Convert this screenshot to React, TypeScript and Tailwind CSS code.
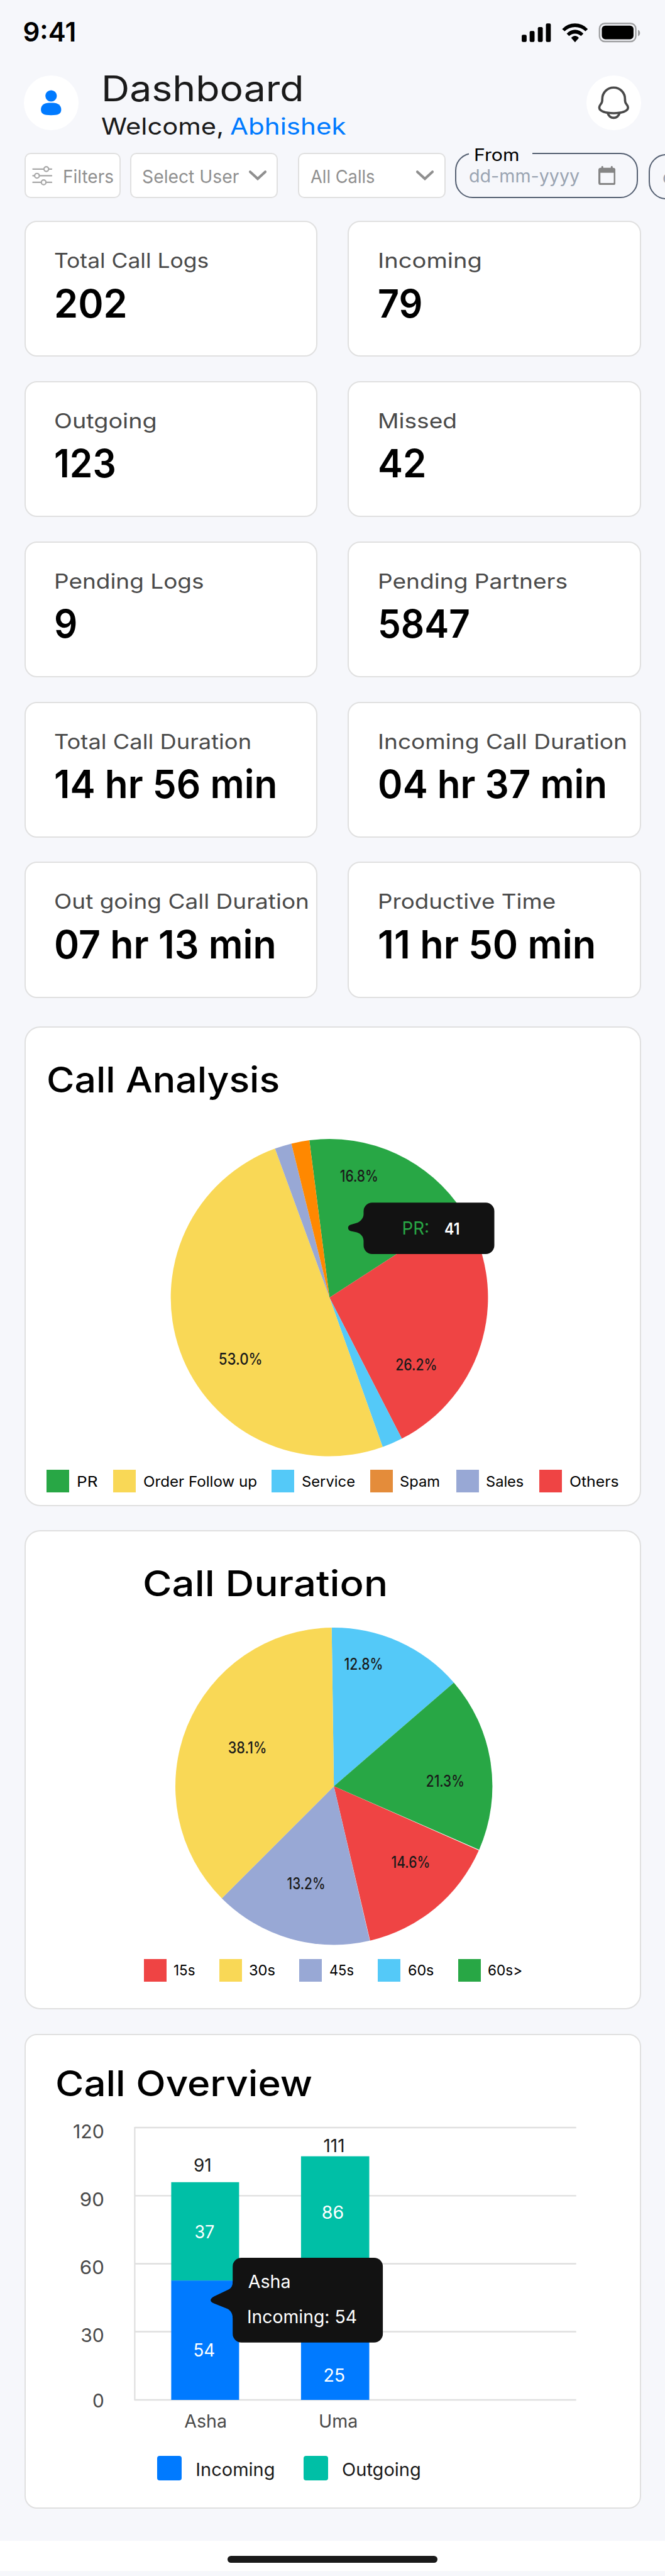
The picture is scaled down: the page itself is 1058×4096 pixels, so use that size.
import type { ReactNode } from "react";

type Stat = { label: string; labelFit: string; value: string; valueFit: string };

const stats: Stat[] = [
  { label: "Total Call Logs", labelFit: "scale-x-[1.074]", value: "202", valueFit: "scale-x-[0.987]" },
  { label: "Incoming", labelFit: "scale-x-[1.155]", value: "79", valueFit: "scale-x-[0.956]" },
  { label: "Outgoing", labelFit: "scale-x-[1.145]", value: "123", valueFit: "scale-x-[0.947]" },
  { label: "Missed", labelFit: "scale-x-[1.125]", value: "42", valueFit: "scale-x-[0.969]" },
  { label: "Pending Logs", labelFit: "scale-x-[1.12]", value: "9", valueFit: "scale-x-[0.94]" },
  { label: "Pending Partners", labelFit: "scale-x-[1.124]", value: "5847", valueFit: "scale-x-[0.943]" },
  { label: "Total Call Duration", labelFit: "scale-x-[1.1]", value: "14 hr 56 min", valueFit: "scale-x-[0.972]" },
  { label: "Incoming Call Duration", labelFit: "scale-x-[1.124]", value: "04 hr 37 min", valueFit: "scale-x-[0.969]" },
  { label: "Out going Call Duration", labelFit: "scale-x-[1.121]", value: "07 hr 13 min", valueFit: "scale-x-[0.981]" },
  { label: "Productive Time", labelFit: "scale-x-[1.115]", value: "11 hr 50 min", valueFit: "scale-x-[0.987]" },
];

function StatusIcons() {
  return (
    <svg viewBox="0 0 1020 330" className="h-[66.1px] w-[204.4px]">
      <rect x="30" y="186" width="39" height="57" rx="11" />
      <rect x="93" y="156" width="39" height="87" rx="11" />
      <rect x="158" y="125" width="39" height="118" rx="11" />
      <rect x="222" y="96" width="39" height="147" rx="11" />
      <path d="M351 141A138 138 0 0 1 555 141L536 159A118 118 0 0 0 371 159Z" />
      <path d="M387 177A88 88 0 0 1 520 177L501 196A68 68 0 0 0 406 196Z" />
      <path d="M423 211A37 37 0 0 1 484 211L453.500 246Z" />
      <rect x="648" y="96" width="288" height="144" rx="42" fill="none" stroke="#a0a1a3" strokeWidth="12" />
      <rect x="666" y="113" width="252" height="109" rx="28" />
      <path d="M954 147C975 155 975 189 954 197Z" fill="#97989a" />
    </svg>
  );
}

function PersonIcon() {
  return (
    <svg viewBox="0 0 86.6 86.6" className="size-full" fill="#007aff">
      <circle cx="43.3" cy="32.5" r="9.1" />
      <path d="M27.100 54C27.100 47 32.500 43.400 40 43.400H46.500C54 43.400 59.400 47.500 59.400 54C59.400 61 55 63.200 43.200 63.200C31.500 63.200 27.100 61 27.100 54Z" />
    </svg>
  );
}

function BellIcon() {
  return (
    <svg viewBox="36 30 432 432" className="size-full" fill="none" stroke="#4a4a4a" strokeWidth="18">
      <path d="M252 126C200 126 162 168 162 215C162 232 162 240 155 250C146 263 138 270 138 285C138 315 190 329 252 329C314 329 366 315 366 285C366 270 357 262 348 250C342 240 342 232 342 215C342 168 304 126 252 126Z" />
      <path d="M205 330C213 352 232 366 252 366C272 366 291 352 299 330" />
    </svg>
  );
}

function SlidersIcon() {
  return (
    <svg viewBox="70 105 172 172" className="size-[34.500px] shrink-0" fill="#fff" stroke="#a8a8a8" strokeWidth="11" strokeLinecap="round">
      <path d="M82 139H230M82 192H230M82 244H230" />
      <circle cx="188" cy="139" r="18.5" />
      <circle cx="114" cy="192" r="18.5" />
      <circle cx="167" cy="244" r="18.5" />
    </svg>
  );
}

function Chevron() {
  return (
    <svg viewBox="0 0 28 16" className="ml-auto h-4 w-7 shrink-0" fill="none" stroke="#8f8f8f" strokeWidth="4" strokeLinecap="round">
      <path d="M2 2.200L14 13.300L26 2.200" />
    </svg>
  );
}

function CalendarIcon() {
  return (
    <svg viewBox="0 0 127 151" preserveAspectRatio="none" className="ml-auto h-[30.300px] w-[27.300px] shrink-0" fill="#858585">
      <rect x="22" y="0" width="14" height="30" rx="7" />
      <rect x="92" y="0" width="14" height="30" rx="7" />
      <path fillRule="evenodd" d="M18 14H109Q127 14 127 32V133Q127 151 109 151H18Q0 151 0 133V32Q0 14 18 14ZM15 53V129Q15 135 21 135H108Q114 135 114 129V53Z" />
    </svg>
  );
}

function SelectBox({ className, children }: { className: string; children: ReactNode }) {
  return (
    <div className={`flex h-[72px] shrink-0 items-center rounded-[10px] border-2 border-[#e0e0e0] bg-white text-[29px] leading-none text-[#909090] ${className}`}>
      {children}
    </div>
  );
}

function DateField({ label, className = "" }: { label?: string; className?: string }) {
  return (
    <div className={`relative flex h-[72px] w-[291.200px] shrink-0 items-center rounded-[28px] border-2 border-[#556072] pr-[33.500px] pl-5 ${className}`}>
      {label && (
        <span className="absolute -top-[13.500px] left-[20.600px] h-8 w-[101px] bg-[#f6f7fb] pl-2 text-[27px] leading-8 text-black">
          <span className="inline-block origin-left scale-x-[1.12]">{label}</span>
        </span>
      )}
      <span className="inline-block origin-left scale-x-[1.024] pt-[3px] text-[28px] leading-none text-[#9aa4b2]">dd-mm-yyyy</span>
      <CalendarIcon />
    </div>
  );
}

function StatCard({ label, labelFit, value, valueFit }: Stat) {
  return (
    <div className="h-[216.200px] rounded-[20px] border-2 border-[#e0e0e0] bg-white pt-[41px] pl-[45.300px] whitespace-nowrap">
      <div className="text-[33px] leading-10 text-[#4a4a4a]">
        <span className={`inline-block origin-left ${labelFit}`}>{label}</span>
      </div>
      <div className="mt-[12.700px] text-[62px] leading-[72px] font-semibold text-black">
        <span className={`inline-block origin-left ${valueFit}`}>{value}</span>
      </div>
    </div>
  );
}

function CardTitle({ fit, className, children }: { fit: string; className?: string; children: ReactNode }) {
  return (
    <h2 className={`relative top-px text-[56px] leading-[64px] font-medium whitespace-nowrap text-black ${className}`}>
      <span className={`inline-block origin-left ${fit}`}>{children}</span>
    </h2>
  );
}

type Slice = { from: number; to: number; color: string };
type PieLabel = { text: string; x: number; y: number; width: number };

function arc(cx: number, cy: number, r: number, from: number, to: number) {
  const point = (deg: number) => {
    const a = ((deg - 90) * Math.PI) / 180;
    return `${(cx + r * Math.cos(a)).toFixed(2)} ${(cy + r * Math.sin(a)).toFixed(2)}`;
  };
  return `M${cx} ${cy}L${point(from)}A${r} ${r} 0 ${to - from > 180 ? 1 : 0} 1 ${point(to)}Z`;
}

function Pie({ slices, labels, className, children }: { slices: Slice[]; labels: PieLabel[]; className: string; children?: ReactNode }) {
  return (
    <svg viewBox="0 0 504.4 504.4" className={`block size-[504.400px] overflow-visible ${className}`}>
      {slices.map((s) => (
        <path key={s.color} d={arc(252.2, 252.2, 252.2, s.from, s.to)} fill={s.color} />
      ))}
      {labels.map((l) => (
        <text key={l.text} x={l.x - 1.2} y={l.y} textLength={l.width + 2.4} lengthAdjust="spacingAndGlyphs" className="fill-[#1a1a1a] text-[25px] font-medium">
          {l.text}
        </text>
      ))}
      {children}
    </svg>
  );
}

const analysisSlices: Slice[] = [
  { from: -7.3, to: 57.1, color: "#28a745" },
  { from: 57.1, to: 152.85, color: "#ef4444" },
  { from: 152.85, to: 160.4, color: "#54c9f8" },
  { from: 160.4, to: 339.9, color: "#f9d856" },
  { from: 339.9, to: 346.1, color: "#98a8d5" },
  { from: 346.1, to: 352.7, color: "#ff8800" },
];

const analysisLabels: PieLabel[] = [
  { text: "16.8%", x: 270, y: 68, width: 58.7 },
  { text: "53.0%", x: 77, y: 358.600, width: 67.5 },
  { text: "26.2%", x: 358.400, y: 368, width: 64 },
];

const durationSlices: Slice[] = [
  { from: -0.8, to: 49.2, color: "#54c9f8" },
  { from: 49.2, to: 113.6, color: "#28a745" },
  { from: 113.9, to: 166.8, color: "#ef4444" },
  { from: 166.9, to: 225, color: "#98a8d5" },
  { from: 225, to: 359.2, color: "#f9d856" },
];

const durationLabels: PieLabel[] = [
  { text: "12.8%", x: 269.800, y: 67.500, width: 59.4 },
  { text: "38.1%", x: 85, y: 200, width: 59.3 },
  { text: "21.3%", x: 400, y: 252.600, width: 58.7 },
  { text: "14.6%", x: 344.700, y: 382.500, width: 59.4 },
  { text: "13.2%", x: 178.700, y: 416.300, width: 58.7 },
];

type Legend = { label: string; swatch: string; width: string; fit: string };

const analysisLegend: Legend[] = [
  { label: "PR", swatch: "bg-[#28a745]", width: "w-[105.900px]", fit: "scale-x-[1.11]" },
  { label: "Order Follow up", swatch: "bg-[#f9d856]", width: "w-[252.400px]", fit: "scale-x-[1.028]" },
  { label: "Service", swatch: "bg-[#54c9f8]", width: "w-[156.500px]", fit: "scale-x-[1.012]" },
  { label: "Spam", swatch: "bg-[#e48c3a]", width: "w-[137px]", fit: "scale-x-[1.008]" },
  { label: "Sales", swatch: "bg-[#98a8d5]", width: "w-[132.200px]", fit: "scale-x-[1.004]" },
  { label: "Others", swatch: "bg-[#ef4444]", width: "w-[130px]", fit: "scale-x-[1.055]" },
];

const durationLegend: Legend[] = [
  { label: "15s", swatch: "bg-[#ef4444]", width: "w-[120.100px]", fit: "scale-x-[0.95]" },
  { label: "30s", swatch: "bg-[#f9d856]", width: "w-[127.500px]", fit: "scale-x-[1.005]" },
  { label: "45s", swatch: "bg-[#98a8d5]", width: "w-[124.800px]", fit: "scale-x-[0.93]" },
  { label: "60s", swatch: "bg-[#54c9f8]", width: "w-[127.600px]", fit: "scale-x-[0.99]" },
  { label: "60s>", swatch: "bg-[#28a745]", width: "w-[110px]", fit: "scale-x-[0.96]" },
];

function LegendRow({ items, className }: { items: Legend[]; className: string }) {
  return (
    <div className={`mt-[22.500px] flex h-9 ${className}`}>
      {items.map((i) => (
        <div key={i.label} className={`flex shrink-0 items-center whitespace-nowrap ${i.width}`}>
          <span className={`size-9 shrink-0 ${i.swatch}`} />
          <span className={`ml-[11.500px] inline-block origin-left text-[23.500px] leading-none font-normal text-black ${i.fit}`}>{i.label}</span>
        </div>
      ))}
    </div>
  );
}

type ChartText = { text: string; x: number; y: number; width: number; color?: string };

const axisLabels: ChartText[] = [
  { text: "120", x: 116.7, y: 3400.2, width: 47.3 },
  { text: "90", x: 127.6, y: 3508.2, width: 36.4 },
  { text: "60", x: 127.6, y: 3616.2, width: 36.4 },
  { text: "30", x: 129, y: 3724.2, width: 35 },
  { text: "0", x: 147.8, y: 3827.7, width: 16.2 },
];

const chartTexts: ChartText[] = [
  { text: "91", x: 309, y: 3453.1, width: 25.7, color: "#1a1a1a" },
  { text: "111", x: 515.5, y: 3421.9, width: 31, color: "#1a1a1a" },
  { text: "37", x: 310.4, y: 3558.9, width: 29, color: "#fff" },
  { text: "86", x: 512.8, y: 3527.7, width: 32.4, color: "#fff" },
  { text: "54", x: 308.4, y: 3746.5, width: 31.7, color: "#fff" },
  { text: "25", x: 515.5, y: 3787.1, width: 31.7, color: "#fff" },
  { text: "Asha", x: 294.2, y: 3859.5, width: 64.8, color: "#4a4a4a" },
  { text: "Uma", x: 508, y: 3859.5, width: 59.4, color: "#4a4a4a" },
];

function BarChart() {
  return (
    <svg viewBox="40.5 3344 976 530" className="block h-[530px] w-[976px]">
      <path d="M213.900 3383H916.200M213.900 3491.300H916.200M213.900 3599.500H916.200M213.900 3707.500H916.200M213.900 3816H916.200M213.900 3382V3817" fill="none" stroke="#e0e0e0" strokeWidth="2.3" />
      {axisLabels.map((t) => (
        <text key={t.text} x={t.x - 1.3} y={t.y} textLength={t.width + 2.6} lengthAdjust="spacingAndGlyphs" className="fill-[#4a4a4a] text-[30px]">
          {t.text}
        </text>
      ))}
      <rect x="271.9" y="3469.8" width="108" height="156.6" fill="#00bfa6" />
      <rect x="271.9" y="3626.2" width="108" height="189.8" fill="#007aff" />
      <rect x="478.4" y="3428.6" width="108.6" height="240" fill="#00bfa6" />
      <rect x="478.4" y="3660" width="108.6" height="156" fill="#007aff" />
      {chartTexts.map((t) => (
        <text key={t.text} x={t.x - 1.5} y={t.y} textLength={t.width + 3} lengthAdjust="spacingAndGlyphs" fill={t.color} className="text-[28.500px]">
          {t.text}
        </text>
      ))}
      <rect x="369.7" y="3590" width="238.9" height="134.800" rx="14" fill="#121212" />
      <path d="M371 3628H369.700C369.700 3635 367 3638.500 363 3640.500L341 3651C332.500 3655 332.500 3660 341 3663L361 3671C366.500 3673.500 369.700 3679 369.700 3686H371Z" fill="#121212" />
      <text x="394.2" y="3637.9" textLength="68" lengthAdjust="spacingAndGlyphs" className="fill-white text-[28.500px]">Asha</text>
      <text x="392.5" y="3693.6" textLength="175" lengthAdjust="spacingAndGlyphs" className="fill-white text-[28.500px]">Incoming: 54</text>
    </svg>
  );
}

export default function App() {
  return (
    <div className="h-[4096px] w-[1058px] overflow-hidden bg-[#f6f7fb] font-['Inter',sans-serif]">
      <div className="flex h-[108.600px] justify-between pr-[30px] pl-[36.500px]">
        <span className="pt-[31px] text-[42px] leading-10 font-semibold text-black">9:41</span>
        <div className="pt-[18px]">
          <StatusIcons />
        </div>
      </div>

      <header className="flex h-[134.200px] items-start px-[38.400px]">
        <div className="mt-[11.600px] size-[86.600px] shrink-0 rounded-full bg-white">
          <PersonIcon />
        </div>
        <div className="ml-[36.400px] whitespace-nowrap text-[#1a1a1a]">
          <h1 className="text-[56px] leading-[64px]">
            <span className="inline-block origin-left scale-x-[1.117]">Dashboard</span>
          </h1>
          <p className="mt-1.5 flex text-[37px] leading-[44px]">
            <span className="w-[204.500px]">
              <span className="inline-block origin-left scale-x-[1.128]">Welcome,</span>
            </span>
            <span className="inline-block origin-left scale-x-[1.137] text-[#007aff]">Abhishek</span>
          </p>
        </div>
        <div className="mt-[11.600px] ml-auto size-[86.600px] shrink-0 rounded-full bg-white">
          <BellIcon />
        </div>
      </header>

      <div className="flex h-[72.100px] pl-[38.500px] whitespace-nowrap">
        <SelectBox className="w-[153.800px] pl-[9.600px]">
          <SlidersIcon />
          <span className="ml-[15.500px] inline-block origin-left scale-x-[0.965] pt-[3px]">Filters</span>
        </SelectBox>
        <SelectBox className="ml-[14.500px] w-[235.500px] pr-[15.900px] pl-[17.200px]">
          <span className="inline-block origin-left scale-x-[0.975] pt-[3px]">Select User</span>
          <Chevron />
        </SelectBox>
        <SelectBox className="ml-[31.400px] w-[235.800px] pr-[17.200px] pl-[18.300px]">
          <span className="inline-block origin-left scale-x-[0.94] pt-[3px]">All Calls</span>
          <Chevron />
        </SelectBox>
        <DateField label="From" className="ml-[14.200px]" />
        <DateField className="mt-0.5 ml-[16.800px]" />
      </div>

      <main className="px-[38.500px] pt-9">
        <div className="grid grid-cols-2 gap-x-[48.500px] gap-y-[38.700px]">
          {stats.map((s) => (
            <StatCard key={s.label} {...s} />
          ))}
        </div>

        <section className="mt-[45.800px] h-[762.600px] rounded-[25px] border-2 border-[#e0e0e0] bg-white pt-[49.900px]">
          <CardTitle fit="scale-x-[1.084]" className="pl-[33.100px]">Call Analysis</CardTitle>
          <Pie slices={analysisSlices} labels={analysisLabels} className="mt-[62.300px] ml-[231.200px]">
            <g transform="translate(269.2 83.1) scale(0.2004)">
              <path
                d="M254 90H1156A68 68 0 0 1 1224 158V430A68 68 0 0 1 1156 498H254A68 68 0 0 1 186 430V395C186 362 165 336 132 326L85 316C56 310 56 275 82 267L132 252C160 243 186 215 186 182V158A68 68 0 0 1 254 90Z"
                fill="#121212"
              />
            </g>
            <text x="367.5" y="151.7" textLength="43.5" lengthAdjust="spacingAndGlyphs" className="fill-[#28a745] text-[29px]">PR:</text>
            <text x="435" y="151.7" textLength="24.5" lengthAdjust="spacingAndGlyphs" className="fill-white text-[25px] font-semibold">41</text>
          </Pie>
          <LegendRow items={analysisLegend} className="ml-[33.700px]" />
        </section>

        <section className="mt-[38.500px] h-[761.600px] rounded-[25px] border-2 border-[#e0e0e0] bg-white pt-[49.200px]">
          <CardTitle fit="scale-x-[1.134]" className="pl-[186.200px]">Call Duration</CardTitle>
          <Pie slices={durationSlices} labels={durationLabels} className="mt-[39px] ml-[238.200px]" />
          <LegendRow items={durationLegend} className="ml-[188.200px]" />
        </section>

        <section className="mt-[39.100px] h-[754.900px] rounded-[20px] border-2 border-[#e0e0e0] bg-white pt-[44.200px]">
          <CardTitle fit="scale-x-[1.105]" className="pl-[47.200px]">Call Overview</CardTitle>
          <BarChart />
          <div className="mt-[31px] ml-[209.800px] flex items-center text-[29px] leading-none text-[#1a1a1a]">
            <span className="size-[38.500px] rounded-[4px] bg-[#007aff]" />
            <span className="ml-[22.500px] w-[171.800px] pt-[3px]">Incoming</span>
            <span className="size-[38.500px] rounded-[4px] bg-[#00bfa6]" />
            <span className="ml-[22.500px] pt-[3px]">Outgoing</span>
          </div>
        </section>
      </main>

      <div className="mt-[50.600px] flex h-[48px] justify-center bg-white pt-6">
        <span className="h-[11.600px] w-[334px] rounded-full bg-[#1a1a1a]" />
      </div>
    </div>
  );
}
